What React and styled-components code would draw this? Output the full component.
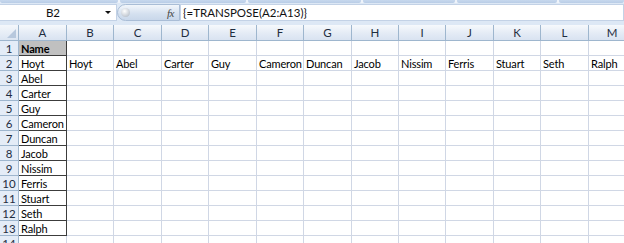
import React from "react";
import styled, { createGlobalStyle } from "styled-components";

const Global = createGlobalStyle`
  html, body { margin: 0; padding: 0; background: #ffffff; overflow: hidden; }
  body { font-family: Lato, "Liberation Sans", sans-serif; }
`;

const Page = styled.div`
  width: 624px;
  height: 243px;
  overflow: hidden;
  background: #ffffff;
`;

const RibbonEdge = styled.div`
  display: flex;
  gap: 2px;
  height: 3px;
  background: #eef3fa;
`;

const RibbonGroup = styled.div`
  width: ${(p) => p.w}px;
  flex: ${(p) => (p.w ? "none" : "1")};
  background: linear-gradient(#c7d8ee, #b9cde6);
  border-radius: 0 0 2px 2px;
`;

const FormulaBar = styled.div`
  display: flex;
  align-items: stretch;
  height: 20px;
  padding: 1px 0 2px 0;
  box-sizing: border-box;
  background: #dde8f5;
`;

const NameBox = styled.div`
  position: relative;
  width: 117px;
  background: #ffffff;
  border: 1px solid #c3d2e6;
  border-left: none;
  box-sizing: border-box;
  display: flex;
  align-items: center;
  padding-right: 10px;
  justify-content: center;
  font-size: 11.5px;
  color: #111;
`;

const DropArrow = styled.span`
  position: absolute;
  right: 5px;
  top: 6px;
  width: 0;
  height: 0;
  border-left: 3px solid transparent;
  border-right: 3px solid transparent;
  border-top: 3px solid #111;
`;

const Gadget = styled.div`
  width: 63px;
  display: flex;
  align-items: center;
  justify-content: space-between;
  padding: 0 5px 0 3px;
  box-sizing: border-box;
  background: linear-gradient(#f2f6fb, #d4e0ef 60%, #c9d7ea);
  border: 1px solid #a9bdd6;
  border-radius: 9px 0 0 9px;
`;

const Knob = styled.span`
  width: 9px;
  height: 9px;
  border-radius: 50%;
  background: radial-gradient(circle at 40% 35%, #ffffff, #c2c9d2 70%, #9aa5b3);
`;

const Fx = styled.span`
  font-family: "Liberation Serif", serif;
  font-style: italic;
  font-size: 11px;
  color: #444;
  letter-spacing: -0.5px;
`;

const FormulaInput = styled.div`
  flex: 1;
  background: #ffffff;
  border: 1px solid #c3d2e6;
  box-sizing: border-box;
  display: flex;
  align-items: center;
  padding-left: 2px;
  font-size: 11.5px;
  color: #111;
`;

const Gap = styled.div`
  height: 2px;
  background: #dde8f5;
`;

const Grid = styled.div`
  display: grid;
  grid-template-columns: 19px 48px 47px 48px 47px 48px 47px 48px 47px 47px 48px 47px 48px 47px;
  grid-template-rows: 16px;
  grid-auto-rows: 15px;
`;

const Corner = styled.div`
  position: relative;
  background: linear-gradient(#f4f7fb, #dbe5f2);
  border-right: 1px solid #9eb6ce;
  border-bottom: 1px solid #9eb6ce;
  box-sizing: border-box;
  &::after {
    content: "";
    position: absolute;
    right: 2px;
    bottom: 2px;
    width: 0;
    height: 0;
    border-left: 9px solid transparent;
    border-bottom: 9px solid #b7c8dd;
  }
`;

const ColHead = styled.div`
  background: linear-gradient(#f6f9fc, #e4ebf5 55%, #d9e3f1);
  border-right: 1px solid #9eb6ce;
  border-bottom: 1px solid #9eb6ce;
  box-sizing: border-box;
  display: flex;
  align-items: center;
  justify-content: center;
  font-size: 11.5px;
  color: #1f2d3f;
`;

const RowHead = styled.div`
  background: #e4ecf7;
  border-right: 1px solid #9eb6ce;
  border-bottom: 1px solid #9eb6ce;
  box-sizing: border-box;
  display: flex;
  align-items: center;
  justify-content: center;
  font-size: 11.5px;
  color: #1f2d3f;
`;

const Cell = styled.div`
  border-right: 1px solid ${(p) => (p.boxed ? "#3c3c3c" : "#d0d7e5")};
  border-bottom: 1px solid ${(p) => (p.boxed ? "#3c3c3c" : "#d0d7e5")};
  box-sizing: border-box;
  background: ${(p) => (p.header ? "#c0c0c0" : "#ffffff")};
  font-weight: ${(p) => (p.header ? 700 : 400)};
  font-size: 11px;
  letter-spacing: -0.15px;
  color: #000;
  padding-left: 2px;
  white-space: nowrap;
  overflow: visible;
  display: flex;
  align-items: center;
  line-height: 1;
`;

const cols = ["A", "B", "C", "D", "E", "F", "G", "H", "I", "J", "K", "L", "M"];
const names = ["Hoyt", "Abel", "Carter", "Guy", "Cameron", "Duncan", "Jacob", "Nissim", "Ferris", "Stuart", "Seth", "Ralph"];

function cellContent(r, c) {
  if (c === 0) {
    if (r === 1) return "Name";
    if (r >= 2 && r <= 13) return names[r - 2];
    return "";
  }
  if (r === 2) return names[c - 1] || "";
  return "";
}

export default function App() {
  const rows = Array.from({ length: 14 }, (_, i) => i + 1);
  return (
    <Page>
      <Global />
      <RibbonEdge>
        <RibbonGroup w={118} />
        <RibbonGroup w={126} />
        <RibbonGroup w={113} />
        <RibbonGroup w={92} />
        <RibbonGroup w={100} />
        <RibbonGroup />
      </RibbonEdge>
      <FormulaBar>
        <NameBox>
          B2
          <DropArrow />
        </NameBox>
        <Gadget>
          <Knob />
          <Fx>fx</Fx>
        </Gadget>
        <FormulaInput>{"{=TRANSPOSE(A2:A13)}"}</FormulaInput>
      </FormulaBar>
      <Gap />
      <Grid>
        <Corner />
        {cols.map((c) => (
          <ColHead key={c}>{c}</ColHead>
        ))}
        {rows.map((r) => (
          <React.Fragment key={r}>
            <RowHead>{r}</RowHead>
            {cols.map((c, ci) => (
              <Cell key={c} boxed={ci === 0 && r <= 13} header={ci === 0 && r === 1}>
                {cellContent(r, ci)}
              </Cell>
            ))}
          </React.Fragment>
        ))}
      </Grid>
    </Page>
  );
}
